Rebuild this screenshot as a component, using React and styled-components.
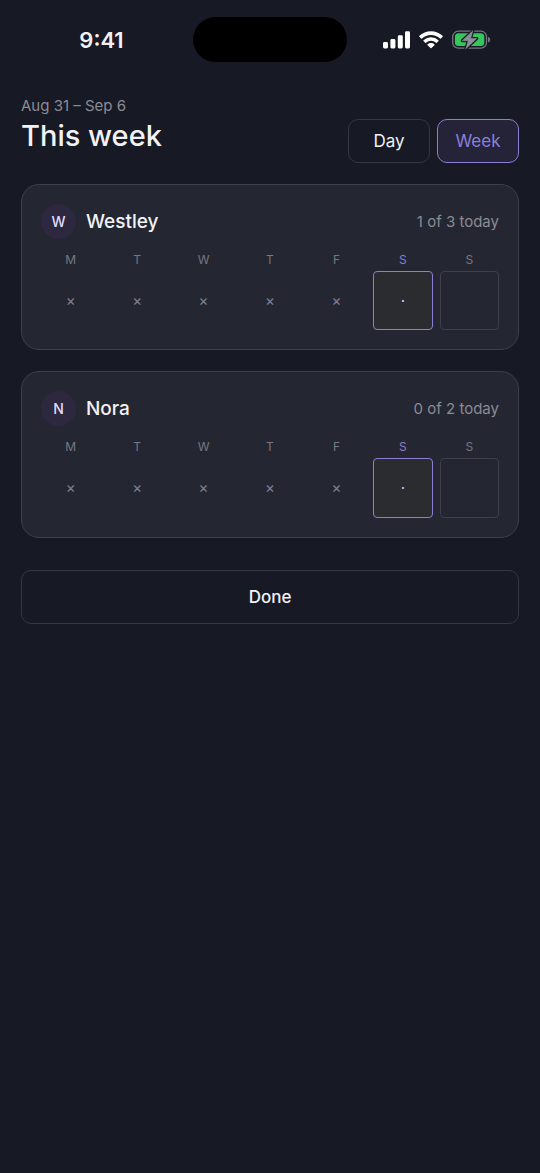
import React, { useState } from "react";
import styled, { createGlobalStyle } from "styled-components";

const color = {
  page: "#171924",
  card: "#242631",
  line: "#3e3f4b",
  lineSoft: "#343642",
  text: "#f2f2f5",
  muted: "#8b8b95",
  faint: "#777882",
  accent: "#8b7fd6",
};

const GlobalStyle = createGlobalStyle`
  *, *::before, *::after { box-sizing: border-box; }
  html { background: ${color.page}; }
  body {
    margin: 0;
    background: ${color.page};
    color: ${color.text};
    font-family: Inter, "Liberation Sans", sans-serif;
    -webkit-font-smoothing: antialiased;
  }
  h1, h2, p { margin: 0; }
  button { font: inherit; color: inherit; margin: 0; padding: 0; cursor: pointer; }
`;

const Screen = styled.div`
  min-height: 100vh;
  display: flex;
  flex-direction: column;
`;

const StatusBar = styled.div`
  display: grid;
  grid-template-columns: 1fr 154px 1fr;
  align-items: center;
  padding: 17px 0 16px;
`;

const Clock = styled.time`
  justify-self: center;
  padding-left: 10px;
  font-size: 22px;
  line-height: 24px;
  font-weight: 600;
`;

const Island = styled.div`
  height: 45px;
  border-radius: 24px;
  background: #000;
`;

const StatusIcons = styled.div`
  justify-self: center;
  display: flex;
  align-items: center;
  gap: 9px;
  padding-right: 13px;

  svg { display: block; }
`;

const Main = styled.main`
  display: flex;
  flex-direction: column;
  padding: 17px 21px 32px;
`;

const Header = styled.header`
  display: flex;
  justify-content: space-between;
  align-items: flex-end;
  margin-bottom: 21px;
`;

const Heading = styled.div`
  display: flex;
  flex-direction: column;
  padding-bottom: 8px;
`;

const DateRange = styled.p`
  font-size: 15px;
  line-height: 22px;
  color: ${color.muted};
`;

const Title = styled.h1`
  font-size: 29px;
  line-height: 38px;
  font-weight: 500;
`;

const Toggle = styled.div`
  display: flex;
  gap: 7px;
`;

const ToggleButton = styled.button`
  width: 82px;
  height: 44px;
  border: 1px solid ${(p) => (p.$active ? color.accent : color.lineSoft)};
  border-radius: 10px;
  background: ${(p) => (p.$active ? "#242338" : "transparent")};
  color: ${(p) => (p.$active ? color.accent : color.text)};
  font-size: 17px;
  line-height: 22px;
`;

const Cards = styled.div`
  display: flex;
  flex-direction: column;
  gap: 21px;
`;

const Card = styled.section`
  padding: 19px;
  border: 1px solid ${color.line};
  border-radius: 18px;
  background: ${color.card};
`;

const CardHeader = styled.div`
  display: flex;
  align-items: center;
  gap: 10px;
`;

const Avatar = styled.span`
  width: 35px;
  height: 35px;
  border-radius: 50%;
  display: grid;
  place-items: center;
  background: #2d2740;
  color: #e2dcfa;
  font-size: 14px;
  line-height: 20px;
  font-weight: 500;
`;

const Name = styled.h2`
  flex: 1;
  font-size: 19px;
  line-height: 24px;
  font-weight: 500;
`;

const Progress = styled.p`
  font-size: 15px;
  line-height: 22px;
  color: ${color.muted};
`;

const Week = styled.div`
  display: grid;
  grid-template-columns: repeat(7, 1fr);
  gap: 7px;
  margin-top: 13px;
`;

const Day = styled.div`
  display: flex;
  flex-direction: column;
  gap: 3px;
  text-align: center;
`;

const DayLabel = styled.span`
  font-size: 12px;
  line-height: 16px;
  color: ${(p) => (p.$today ? color.accent : color.faint)};
`;

const cellLook = {
  missed: `border-color: transparent; background: transparent;`,
  today: `border-color: ${color.accent}; background: #2b2c30;`,
  upcoming: `border-color: ${color.line}; background: transparent;`,
};

const DayCell = styled.button`
  aspect-ratio: 1;
  display: grid;
  place-items: center;
  border: 1px solid;
  border-radius: 4px;
  font-size: 15px;
  line-height: 20px;
  ${(p) => cellLook[p.$state]}
  color: ${(p) => (p.$state === "today" ? "#d6d0f5" : "#7f8093")};
`;

const DoneButton = styled.button`
  height: 54px;
  margin-top: 32px;
  border: 1px solid ${color.lineSoft};
  border-radius: 10px;
  background: transparent;
  font-size: 17px;
  line-height: 22px;
  font-weight: 500;
`;

const mark = { missed: "×", today: "·", upcoming: "" };

const days = [
  ["M", "Monday", "missed"],
  ["T", "Tuesday", "missed"],
  ["W", "Wednesday", "missed"],
  ["T", "Thursday", "missed"],
  ["F", "Friday", "missed"],
  ["S", "Saturday", "today"],
  ["S", "Sunday", "upcoming"],
];

const people = [
  { name: "Westley", progress: "1 of 3 today" },
  { name: "Nora", progress: "0 of 2 today" },
];

function SignalIcon() {
  return (
    <svg width="27" height="18" viewBox="0 0 27 18" fill="#fff" aria-hidden="true">
      <rect x="0" y="11" width="5" height="6.500" rx="1.400" />
      <rect x="7.400" y="8" width="5" height="9.500" rx="1.400" />
      <rect x="14.800" y="4.300" width="5" height="13.200" rx="1.400" />
      <rect x="22" y="0.300" width="5" height="17.200" rx="1.400" />
    </svg>
  );
}

function WifiIcon() {
  return (
    <svg width="24" height="18" viewBox="0 0 24 18" fill="#fff" aria-hidden="true">
      <path d="M12 0.200C16.500 0.200 20.600 1.900 23.600 4.800a.6.6 0 0 1 0 .9L21.900 7.400a.6.6 0 0 1-.9 0A13 13 0 0 0 12 3.900 13 13 0 0 0 3 7.400a.6.6 0 0 1-.9 0L.4 5.700a.6.6 0 0 1 0-.9C3.400 1.900 7.500 .2 12 .2Z" />
      <path d="M12 6.200a10.700 10.700 0 0 1 7.500 3 .6.6 0 0 1 0 .9l-1.700 1.700a.6.6 0 0 1-.8 0A7.300 7.300 0 0 0 12 9.800a7.300 7.300 0 0 0-5 2 .6.6 0 0 1-.8 0L4.500 10.100a.6.6 0 0 1 0-.9 10.700 10.700 0 0 1 7.500-3Z" />
      <path d="M12 12c1.300 0 2.500.5 3.400 1.300a.6.6 0 0 1 0 .9l-2.900 2.900a.7.7 0 0 1-1 0l-2.900-2.900a.6.6 0 0 1 0-.9c.9-.8 2.100-1.300 3.400-1.300Z" />
    </svg>
  );
}

function BatteryIcon() {
  const bolt = "M20.800 0.800 10.300 10.700H16.300L13.800 18.800 24.800 8.400H18.600Z";
  return (
    <svg width="39" height="20" viewBox="0 0 39 20" aria-hidden="true">
      <rect x="0.700" y="1.200" width="33.800" height="17" rx="5.600" fill="none" stroke="#747580" strokeWidth="1.300" />
      <path d="M36 6.800c1.300.4 2.200 1.500 2.200 2.900S37.300 12.200 36 12.600Z" fill="#747580" />
      <rect x="2.900" y="3.300" width="29.400" height="12.800" rx="3.600" fill="#34c759" />
      <path d={bolt} fill={color.page} stroke={color.page} strokeWidth="3" strokeLinejoin="round" />
      <path d={bolt} fill="#8d8e97" stroke="#8d8e97" strokeWidth="0.600" strokeLinejoin="round" />
    </svg>
  );
}

function PersonCard({ name, progress }) {
  return (
    <Card aria-label={name}>
      <CardHeader>
        <Avatar aria-hidden="true">{name[0]}</Avatar>
        <Name>{name}</Name>
        <Progress>{progress}</Progress>
      </CardHeader>
      <Week>
        {days.map(([letter, day, state]) => (
          <Day key={day}>
            <DayLabel $today={state === "today"}>{letter}</DayLabel>
            <DayCell type="button" $state={state} aria-label={`${day}, ${state}`}>
              {mark[state]}
            </DayCell>
          </Day>
        ))}
      </Week>
    </Card>
  );
}

export default function App() {
  const [view, setView] = useState("Week");
  return (
    <Screen>
      <GlobalStyle />
      <StatusBar>
        <Clock>9:41</Clock>
        <Island />
        <StatusIcons>
          <SignalIcon />
          <WifiIcon />
          <BatteryIcon />
        </StatusIcons>
      </StatusBar>
      <Main>
        <Header>
          <Heading>
            <DateRange>Aug 31 – Sep 6</DateRange>
            <Title>This week</Title>
          </Heading>
          <Toggle>
            {["Day", "Week"].map((v) => (
              <ToggleButton
                key={v}
                type="button"
                $active={view === v}
                aria-pressed={view === v}
                onClick={() => setView(v)}
              >
                {v}
              </ToggleButton>
            ))}
          </Toggle>
        </Header>
        <Cards>
          {people.map((p) => (
            <PersonCard key={p.name} {...p} />
          ))}
        </Cards>
        <DoneButton type="button">Done</DoneButton>
      </Main>
    </Screen>
  );
}
